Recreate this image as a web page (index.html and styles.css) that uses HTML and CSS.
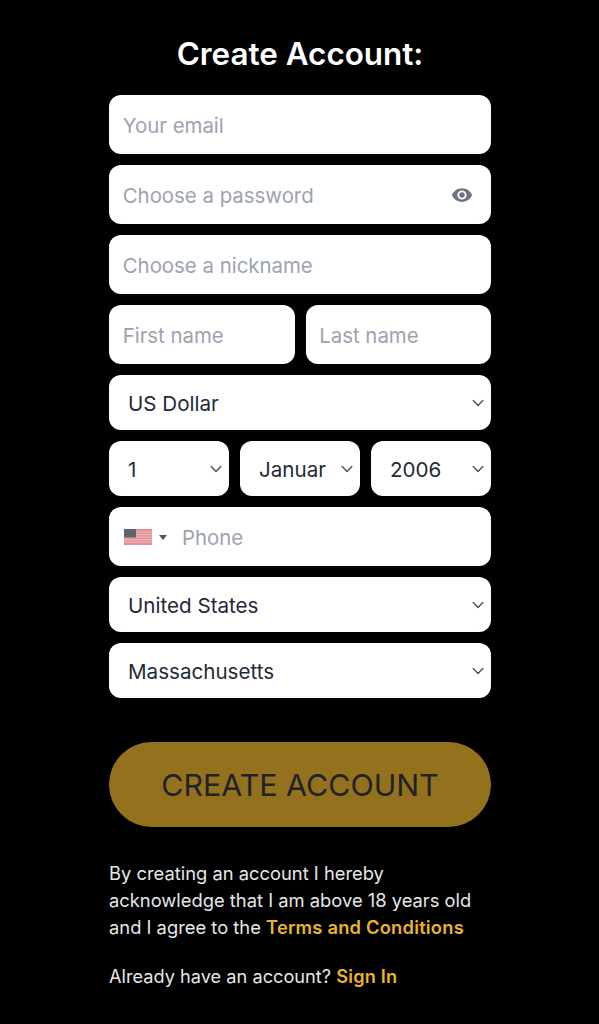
FILE: index.html
```html
<!DOCTYPE html>
<html lang="en">
<head>
    <meta charset="UTF-8">
    <meta name="viewport" content="width=device-width, initial-scale=1.0">
    <title>Create Account</title>
    <link rel="stylesheet" href="styles.css">
</head>
<body>
    <form class="signup-form">
        <h1 class="form-title">Create Account:</h1>
        <input class="field" type="email" placeholder="Your email">
        <div class="password-wrap">
            <input class="field" type="password" placeholder="Choose a password">
            <svg class="eye-icon" viewBox="0 0 24 24" width="22" height="22" aria-hidden="true">
                <path fill="#6b7280" fill-rule="evenodd" d="M12 4.5C7 4.5 2.73 7.61 1 12c1.73 4.39 6 7.5 11 7.5s9.27-3.11 11-7.5c-1.73-4.39-6-7.5-11-7.5zM12 17a5 5 0 1 1 0-10 5 5 0 0 1 0 10zm0-8a3 3 0 1 0 0 6 3 3 0 0 0 0-6z"/>
            </svg>
        </div>
        <input class="field" type="text" placeholder="Choose a nickname">
        <div class="name-row">
            <input class="field" type="text" placeholder="First name">
            <input class="field" type="text" placeholder="Last name">
        </div>
        <select class="picker">
            <option>US Dollar</option>
        </select>
        <div class="date-row">
            <select class="picker"><option>1</option></select>
            <select class="picker"><option>Januar</option></select>
            <select class="picker"><option>2006</option></select>
        </div>
        <div class="phone-field">
            <svg class="flag" viewBox="0 0 28 16" width="28" height="16" aria-hidden="true">
                <rect width="28" height="16" fill="#e48d95"/>
                <path fill="#eab4b8" d="M0 2.5h28v1.2H0zM0 5h28v1.2H0zM0 7.5h28v1.2H0zM0 10h28v1.2H0zM0 12.5h28v1.2H0z"/>
                <rect width="12" height="8.5" fill="#62626f"/>
            </svg>
            <span class="flag-caret"></span>
            <input class="phone-input" type="tel" placeholder="Phone">
        </div>
        <select class="picker"><option>United States</option></select>
        <select class="picker"><option>Massachusetts</option></select>
        <button class="create-btn" type="button">CREATE ACCOUNT</button>
        <p class="terms">By creating an account I hereby acknowledge that I am above 18 years old and I agree to the <a href="#">Terms and Conditions</a></p>
        <p class="signin">Already have an account? <a href="#">Sign In</a></p>
    </form>
</body>
</html>
```

FILE: styles.css
```css
* {
    box-sizing: border-box;
}
body {
    margin: 0;
    background-color: #000;
    font-family: Inter, "Liberation Sans", sans-serif;
    color: #e5e7eb;
}
.signup-form {
    width: 382px;
    margin-left: 109px;
    padding-top: 32px;
    display: flex;
    flex-direction: column;
    gap: 11px;
}
.form-title {
    margin: 0 0 7px;
    height: 45px;
    line-height: 44px;
    font-size: 31.4px;
    font-weight: 600;
    color: #fff;
    text-align: center;
}
.field {
    width: 100%;
    height: 59px;
    padding: 1px 13.7px 0;
    border: none;
    border-radius: 12px;
    background: #fff;
    font-family: inherit;
    font-size: 20.4px;
    color: #1f2937;
    display: block;
}
.field::placeholder, .phone-input::placeholder {
    color: #9ca3af;
    opacity: 1;
}
.password-wrap {
    position: relative;
}
.eye-icon {
    position: absolute;
    right: 18px;
    top: 19px;
}
.name-row {
    display: grid;
    grid-template-columns: 1fr 1fr;
    gap: 11px;
}
.picker {
    width: 100%;
    height: 55px;
    padding: 1px 30px 0 19px;
    border: none;
    border-radius: 12px;
    font-family: inherit;
    font-size: 20.6px;
    color: #1f2937;
    appearance: none;
    background: #fff url("data:image/svg+xml,%3Csvg xmlns='http://www.w3.org/2000/svg' viewBox='0 0 20 20' fill='none'%3E%3Cpath d='M6 8l4 4 4-4' stroke='%234b5563' stroke-width='1.2' stroke-linecap='round' stroke-linejoin='round'/%3E%3C/svg%3E") no-repeat right 1px center / 24px 24px;
}
.date-row {
    display: grid;
    grid-template-columns: 1fr 1fr 1fr;
    gap: 11px;
}
.phone-field {
    height: 59px;
    padding: 1px 0 0 14px;
    border-radius: 12px;
    background: #fff;
    display: flex;
    align-items: center;
}
.flag {
    flex-shrink: 0;
    margin-left: 1px;
}
.flag-caret {
    margin-left: 7px;
    border-left: 4px solid transparent;
    border-right: 4px solid transparent;
    border-top: 5px solid #4b5563;
}
.phone-input {
    flex: 1;
    min-width: 0;
    margin-left: 13px;
    border: none;
    outline: none;
    background: none;
    font-family: inherit;
    font-size: 20.4px;
}
.create-btn {
    height: 85px;
    margin-top: 33px;
    border: none;
    border-radius: 43px;
    background-color: #94711c;
    font-family: inherit;
    font-size: 30.4px;
    color: #1f2328;
}
.terms {
    margin: 22px 0 0;
    font-size: 18.35px;
    line-height: 27px;
}
.signin {
    margin: 10.5px 0 0;
    font-size: 18.2px;
    line-height: 27px;
}
.terms a, .signin a {
    color: #eab32e;
    font-weight: 600;
    letter-spacing: 0.2px;
    text-decoration: none;
}
```
